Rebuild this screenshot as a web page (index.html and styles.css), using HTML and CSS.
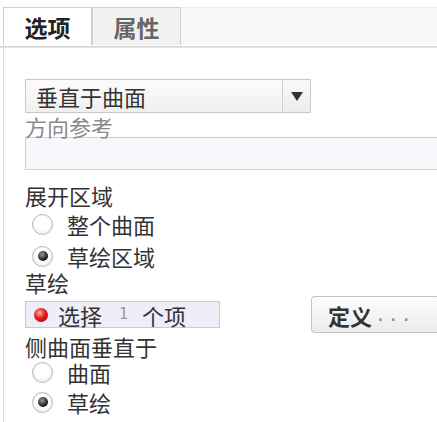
FILE: index.html
```html
<!DOCTYPE html>
<html lang="zh">
<head>
<meta charset="utf-8">
<link rel="stylesheet" href="styles.css">
</head>
<body>
<div class="tabs">
  <div class="tab active">选项</div>
  <div class="tab">属性</div>
  <div class="tab-fill"></div>
</div>
<div class="panel">
  <div class="select">
    <div class="select-text">垂直于曲面</div>
    <div class="select-arrow"><span class="tri"></span></div>
  </div>
  <div class="label muted">方向参考</div>
  <div class="input"></div>
  <div class="label group">展开区域</div>
  <div class="radio-row r1"><span class="radio"></span><span>整个曲面</span></div>
  <div class="radio-row r2"><span class="radio checked"></span><span>草绘区域</span></div>
  <div class="label">草绘</div>
  <div class="sel-row">
    <div class="selbox"><span class="dot"></span><span>选择</span><span class="num">1</span><span>个项</span></div>
    <div class="btn"><span>定义</span><span class="dots">...</span></div>
  </div>
  <div class="label">侧曲面垂直于</div>
  <div class="radio-row r3"><span class="radio"></span><span>曲面</span></div>
  <div class="radio-row r4"><span class="radio checked"></span><span>草绘</span></div>
</div>
</body>
</html>
```
FILE: styles.css
```css
html, body { margin: 0; padding: 0; background: #fff; }
body {
  width: 437px; height: 422px; overflow: hidden;
  font-family: "Noto Sans CJK SC", "Noto Sans", sans-serif;
  font-size: 22px; color: #333;
}
.tabs {
  display: flex; margin-top: 7px; height: 38px;
  border-bottom: 1px solid #fff;
  box-shadow: 0 1px 0 #d4d4d4, 0 2px 0 #e4e4e4;
}
.tab {
  width: 89px; display: flex; align-items: center; justify-content: center;
  font-weight: bold; font-size: 23px;
  border: 1px solid #cfcfcf; border-bottom: none; box-sizing: border-box;
  background: #f1f1f1; color: #666;
}
.tab:first-child { margin-left: 3px; }
.tab.active { background: #fff; color: #222; }
.tab-fill { flex: 1; background: #f8f8f8; border-top: 1px solid #eee; }
.panel {
  margin-left: 3px; margin-top: 1px;
  border-left: 1px solid #dcdcdc;
  padding: 32px 0 0 21px; height: 375px; box-sizing: border-box; overflow: hidden;
}
.select {
  display: flex; width: 286px; height: 34px; box-sizing: border-box;
  border: 1px solid #c8c8c8;
  background: linear-gradient(#fbfbfb, #f0f0f0);
}
.select-text { flex: 1; display: flex; align-items: center; padding-left: 10px; line-height: 1; }
.select-arrow {
  width: 27px; border-left: 1px solid #cfcfcf;
  display: flex; align-items: center; justify-content: center;
  background: linear-gradient(#fafafa, #ececec);
}
.tri { width: 0; height: 0; border-left: 6px solid transparent; border-right: 6px solid transparent; border-top: 9px solid #333; }
.label { height: 26px; display: flex; align-items: center; line-height: 1; white-space: nowrap; }
.label.muted { height: 24px; align-items: flex-end; color: #8a8a8a; }
.input {
  width: 440px; height: 33px; box-sizing: border-box;
  border: 1px solid #cfcfcf; border-right: none; background: #f8f7fc;
}
.label.group { margin-top: 12px; }
.radio-row { height: 26px; display: flex; align-items: center; line-height: 1; }
.r1 { margin-top: 3px; }
.r2 { margin-top: 6px; }
.r4 { margin-top: 4px; }
.radio {
  width: 21px; height: 21px; border-radius: 50%; box-sizing: border-box;
  border: 1px solid #b8b8b8; margin: 0 14px 0 7px;
  background: radial-gradient(circle at 50% 40%, #fff 45%, #e4e4e4 100%);
  box-shadow: inset 0 0 1px #ddd;
  display: flex; align-items: center; justify-content: center;
}
.radio.checked::after {
  content: ""; width: 10px; height: 10px; border-radius: 50%;
  background: radial-gradient(circle at 40% 35%, #999 0%, #222 60%, #000 100%);
}
.sel-row { display: flex; align-items: center; height: 37px; margin-top: 1px; }
.selbox {
  width: 202px; height: 27px; box-sizing: border-box;
  border: 1px solid #cacaca; background: #efedf8;
  display: flex; align-items: center; line-height: 1;
}
.dot {
  width: 14px; height: 14px; border-radius: 50%; margin: 0 10px 0 8px;
  background: radial-gradient(circle at 40% 35%, #ffb0a0 0%, #e81818 45%, #960000 100%);
}
.num { font-family: "DejaVu Sans Mono", monospace; font-size: 15px; color: #999; margin: 0 14px 0 17px; }
.btn {
  margin-left: 91px; width: 130px; height: 37px; box-sizing: border-box;
  border: 1px solid #c4c4c4; border-right: none; border-radius: 4px 0 0 4px;
  background: linear-gradient(#fdfdfd, #ececec);
  display: flex; align-items: center; padding-left: 16px; line-height: 1;
  font-weight: bold; color: #333;
}
.dots { font-family: "DejaVu Sans Mono", monospace; font-weight: normal; color: #888; font-size: 18px; letter-spacing: 2px; margin-left: 3px; }
```
